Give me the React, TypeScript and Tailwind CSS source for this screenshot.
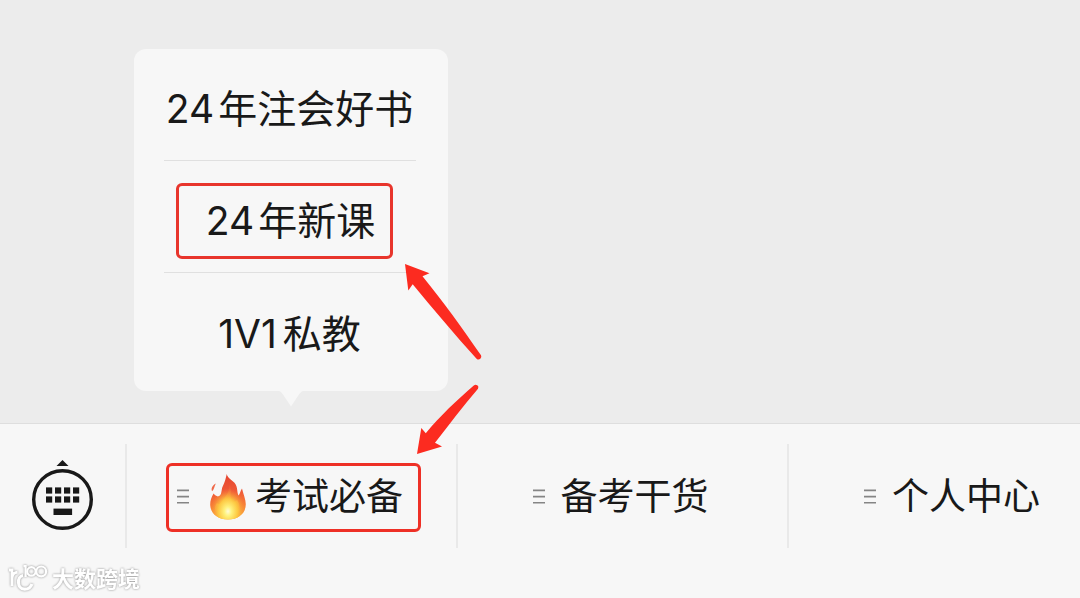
import React from "react";

function ListIcon() {
  return (
    <svg viewBox="0 0 12 16" className="h-4 w-3 shrink-0" aria-hidden="true">
      <path d="M0 1.4H12M0 7.6H12M0 13.8H12" stroke="#858585" strokeWidth="1.6" />
    </svg>
  );
}

function KeyboardIcon() {
  return (
    <svg viewBox="0 1 64 72" className="h-[72px] w-16" aria-hidden="true">
      <path d="M31.5 1L37.5 7H25.5Z" fill="#191919" />
      <circle cx="31.5" cy="40.5" r="28.8" fill="none" stroke="#191919" strokeWidth="3.4" />
      <g fill="#191919">
        {[15, 24, 33, 42].map((x) => (
          <React.Fragment key={x}>
            <rect x={x} y="28.4" width="6.2" height="6.2" />
            <rect x={x} y="37.4" width="6.2" height="6.2" />
          </React.Fragment>
        ))}
        <rect x="22.5" y="49.6" width="18.6" height="6.4" />
      </g>
    </svg>
  );
}

const flameBody =
  "M17.8 1C16.6 5.5 16 9 13.9 13C12 16.5 13.2 21 10.6 22.8C8.4 24.2 6.6 23 4.6 20.6C2.4 24 1 28 1.2 32.2C1.7 40.6 8.8 46.5 19 46.5C29.8 46.5 36.8 40 36.8 31.3C36.8 26.4 34.2 21 33 15.6C31.2 17.6 31.4 20.4 29.6 22.6C27.6 19.4 29.3 14.3 25.5 9.8C22.7 6.6 18.4 5 17.8 1Z";

function FlameIcon() {
  return (
    <svg viewBox="0 0 38 48" className="h-12 w-[38px] shrink-0" aria-hidden="true">
      <defs>
        <linearGradient id="flame" x1="0.45" y1="0" x2="0.5" y2="1">
          <stop offset="0" stopColor="#e5442e" />
          <stop offset="0.4" stopColor="#ef5a38" />
          <stop offset="0.7" stopColor="#f77f36" />
          <stop offset="1" stopColor="#fbac3b" />
        </linearGradient>
        <radialGradient id="glow" cx="0.5" cy="0.82" r="0.5">
          <stop offset="0" stopColor="#fffbd8" />
          <stop offset="0.2" stopColor="#fff27e" />
          <stop offset="0.55" stopColor="#fdcc42" stopOpacity="0.9" />
          <stop offset="1" stopColor="#f88a35" stopOpacity="0" />
        </radialGradient>
        <linearGradient id="tongue" x1="0.5" y1="0" x2="0.5" y2="1">
          <stop offset="0" stopColor="#f98a3c" stopOpacity="0" />
          <stop offset="0.6" stopColor="#fcb040" stopOpacity="0.8" />
          <stop offset="1" stopColor="#fdd24a" stopOpacity="0" />
        </linearGradient>
      </defs>
      <path d={flameBody} fill="url(#flame)" />
      <path
        d="M20 11C23.5 17 20.5 22 22 27C23.5 30 26 29 28 27C31 31 32 38 28 42H9C5 38 5.5 33 8 30C9.5 32 11.5 31 13 28.5C16 24 21 20 20 11Z"
        fill="url(#tongue)"
      />
      <path d={flameBody} fill="url(#glow)" />
      <path d="M6.8 10.6C3 12.8 2 15.6 3 18.2C5.4 16.6 5 14 6.8 10.6Z" fill="#ef6848" />
    </svg>
  );
}

function Arrows() {
  return (
    <svg
      viewBox="400 260 90 200"
      className="pointer-events-none absolute top-[211px] left-[266px] h-[200px] w-[90px]"
      aria-hidden="true"
    >
      <g fill="#fc2b20">
        <path d="M405 264L429.5 273.2L422.5 276.2C442 300 463 329 481 355.3A2.9 2.9 0 0 1 476.8 359C455 335 433 309 412.7 284.3L408.3 290.5Z" />
        <path d="M417 454L421.3 428L425.8 433.3C440 416 457 400 473.8 385.5A2.7 2.7 0 0 1 478 388.8C463 406 449 425 435 442.7L442 446.4Z" />
      </g>
    </svg>
  );
}

function Watermark() {
  return (
    <div className="absolute bottom-1 left-2 flex items-center gap-1 text-white drop-shadow-[0_0_1px_#8c8c8c]">
      <svg viewBox="0 0 40 30" className="h-[30px] w-10" fill="none" stroke="currentColor" aria-hidden="true">
        <path d="M1 6H4V22M4 14C4.4 10.5 6 8.6 9.5 8.2" strokeWidth="2.8" />
        <path d="M15 11.5C9 12 8.5 25 16.5 25.2C20 25.3 22.6 23.600 24 20" strokeWidth="3.2" />
        <path d="M15.5 2.2H17.6V13" strokeWidth="2.2" />
        <circle cx="23.4" cy="7.4" r="4.2" strokeWidth="2.2" />
        <circle cx="33.2" cy="7.4" r="4.9" strokeWidth="2.2" />
      </svg>
      <span className="text-[22px] leading-[30px] font-bold">大数跨境</span>
    </div>
  );
}

const columns = "grid grid-cols-[125px_331fr_331fr_293fr]";

const tabClass = "flex h-[104px] items-center border-l-2 border-[#e9e9e9] pt-0.5 text-[37px] leading-[48px]";

export default function App() {
  return (
    <main className="relative flex min-h-screen flex-col justify-end overflow-hidden bg-[#ececec] font-['Inter','Noto_Sans_CJK_SC',sans-serif] text-[#191919]">
      <div className={columns}>
        <div className="relative col-start-2 mb-8 w-[314px] justify-self-center rounded-xl bg-[#f7f7f7] pr-8 pl-[30px] text-[39px] leading-[48px]">
          <ul className="divide-y divide-[#e0e0e0]">
            <li className="flex h-[112px] items-center justify-center pt-2">
              <button type="button" className="flex gap-1 whitespace-nowrap">
                <span>24</span>
                <span>年注会好书</span>
              </button>
            </li>
            <li className="flex h-[112px] items-center justify-center pt-2">
              <button
                type="button"
                className="mr-2.5 flex h-[76px] w-[217px] items-center justify-center gap-1 rounded-md border-3 border-[#e8352c] pl-3 whitespace-nowrap"
              >
                <span>24</span>
                <span>年新课</span>
              </button>
            </li>
            <li className="flex h-[118px] items-center justify-center pt-1">
              <button type="button" className="flex gap-1.5 whitespace-nowrap">
                <span>1V1</span>
                <span>私教</span>
              </button>
            </li>
          </ul>
          <svg viewBox="0 0 24 16" className="absolute top-full left-[145px] h-4 w-6" aria-hidden="true">
            <path d="M0 0H24C21 1 19 5 17 8L12 15.5L7 8C5 5 3 1 0 0Z" fill="#f7f7f7" />
          </svg>
          <Arrows />
        </div>
      </div>

      <nav className={`${columns} border-t border-[#dedede] bg-[#f7f7f7] pt-5 pb-[50px]`}>
        <button type="button" aria-label="键盘" className="flex items-center justify-center">
          <KeyboardIcon />
        </button>
        <div className={`${tabClass} justify-center pl-1`}>
          <button
            type="button"
            className="flex h-[69px] w-[255px] items-center rounded-md border-3 border-[#ee3026] pl-2 whitespace-nowrap"
          >
            <ListIcon />
            <span className="ml-5">
              <FlameIcon />
            </span>
            <span className="ml-2">考试必备</span>
          </button>
        </div>
        <div className={`${tabClass} justify-center pr-1`}>
          <button type="button" className="flex items-center gap-4 whitespace-nowrap">
            <ListIcon />
            <span>备考干货</span>
          </button>
        </div>
        <div className={`${tabClass} justify-end pr-10`}>
          <button type="button" className="flex items-center gap-4 whitespace-nowrap">
            <ListIcon />
            <span>个人中心</span>
          </button>
        </div>
      </nav>
      <Watermark />
    </main>
  );
}
